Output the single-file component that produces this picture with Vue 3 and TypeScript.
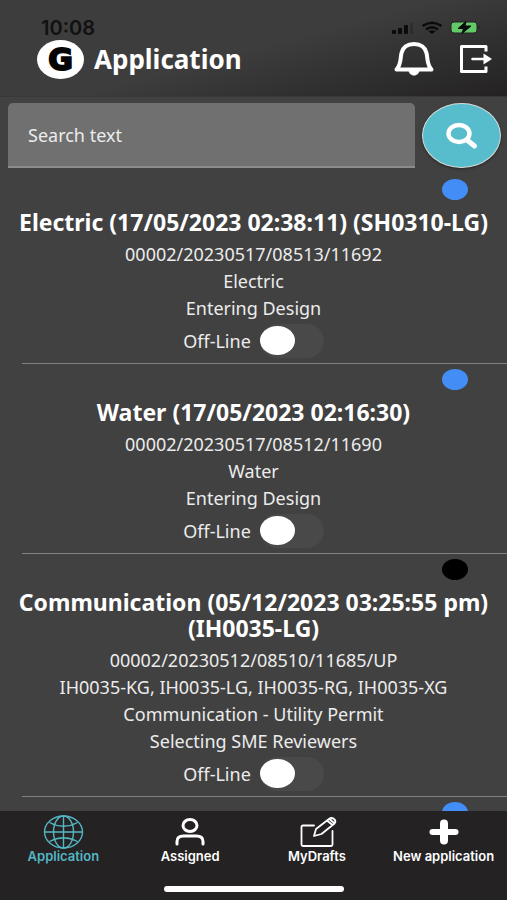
<script setup lang="ts">
import { ref } from 'vue'

interface Entry {
  title: string
  lines: string[]
  dot: 'blue' | 'black'
  offline: boolean
}

const query = ref('')

const entries = ref<Entry[]>([
  {
    title: 'Electric (17/05/2023 02:38:11) (SH0310-LG)',
    lines: ['00002/20230517/08513/11692', 'Electric', 'Entering Design'],
    dot: 'blue',
    offline: false,
  },
  {
    title: 'Water (17/05/2023 02:16:30)',
    lines: ['00002/20230517/08512/11690', 'Water', 'Entering Design'],
    dot: 'blue',
    offline: false,
  },
  {
    title: 'Communication (05/12/2023 03:25:55 pm) (IH0035-LG)',
    lines: [
      '00002/20230512/08510/11685/UP',
      'IH0035-KG, IH0035-LG, IH0035-RG, IH0035-XG',
      'Communication - Utility Permit',
      'Selecting SME Reviewers',
    ],
    dot: 'black',
    offline: false,
  },
])

const tabs = ['Application', 'Assigned', 'MyDrafts', 'New application']
const active = ref('Application')
</script>

<template>
  <div class="screen">
    <header class="header">
      <div class="status">
        <span class="time">10:08</span>
        <svg class="status-icons" width="90" height="16" viewBox="0 0 90 16" aria-hidden="true">
          <rect x="1" y="10" width="4" height="4" rx="1" />
          <rect x="7" y="8" width="4" height="6" rx="1" />
          <rect x="13" y="5" width="4" height="9" rx="1" />
          <rect x="19" y="3" width="3" height="11" rx="1" opacity="0.25" />
          <g fill="none" stroke="#0b0b0b" stroke-width="2.6">
            <path d="M31.500 6Q41 -0.500 50.500 6" />
            <path d="M35 9.500Q41 5 47 9.500" />
          </g>
          <path d="M37.500 11.500Q41 9 44.500 11.500L41 14Z" />
          <rect x="60" y="2" width="26" height="11" rx="3" fill="#62c968" stroke="#222" stroke-width="1" />
          <path d="M87.500 5.500q2.500 2 0 4z" fill="#222" />
          <path d="M75 1.500L67 8.500h5.500L71 13.500l9-7.500h-6z" stroke="#0b0b0b" />
        </svg>
      </div>
      <div class="bar">
        <span class="logo" aria-hidden="true">G</span>
        <h1>Application</h1>
        <button class="icon-btn" type="button" aria-label="Notifications">
          <svg width="42" height="36" viewBox="0 0 42 36">
            <path d="M3.500 28.500C8.500 23 7 18 8.500 12C10 6 15 3 21 3S32 6 33.500 12C35 18 33.500 23 38.500 28.500Z" fill="none" stroke="#fff" stroke-width="4" stroke-linejoin="round" />
            <path d="M15.500 29h11c0 3-2.500 5.500-5.500 5.500s-5.500-2.500-5.500-5.500z" fill="#fff" />
          </svg>
        </button>
        <button class="icon-btn" type="button" aria-label="Log out">
          <svg width="34" height="30" viewBox="0 0 34 30">
            <path d="M27 7.500V2.500H2.500V27.500H27V22.500" fill="none" stroke="#fff" stroke-width="3" stroke-linejoin="round" />
            <path d="M13.500 15h13" stroke="#fff" stroke-width="2.600" stroke-linecap="round" />
            <path d="M24.500 9.500L33 15l-8.500 5.500z" fill="#fff" />
          </svg>
        </button>
      </div>
    </header>

    <main class="content">
      <form class="search" role="search" @submit.prevent>
        <input v-model="query" type="text" placeholder="Search text" aria-label="Search text" />
        <button type="submit" aria-label="Search">
          <svg width="34" height="28" viewBox="0 0 34 28">
            <ellipse cx="14" cy="11.500" rx="10.500" ry="8.500" fill="none" stroke="#fff" stroke-width="4.400" />
            <path d="M22 18l7.500 6" stroke="#fff" stroke-width="5" stroke-linecap="round" />
          </svg>
        </button>
      </form>

      <ul class="list">
        <li v-for="entry in entries" :key="entry.title" class="entry">
          <span class="dot" :class="entry.dot"></span>
          <h2>{{ entry.title }}</h2>
          <p v-for="line in entry.lines" :key="line">{{ line }}</p>
          <label class="toggle">
            <span>Off-Line</span>
            <input v-model="entry.offline" type="checkbox" role="switch" />
          </label>
          <hr />
        </li>
        <li class="entry"><span class="dot blue"></span></li>
      </ul>
    </main>

    <nav class="tabs">
      <div class="tab-row">
        <a
          v-for="(tab, i) in tabs"
          :key="tab"
          href="#"
          class="tab"
          :class="{ active: tab === active }"
          @click.prevent="active = tab"
        >
          <svg v-if="i === 0" width="42" height="34" viewBox="0 0 42 34" fill="none" stroke="currentColor" stroke-width="1.400">
            <ellipse cx="21.500" cy="17" rx="19" ry="16" />
            <ellipse cx="21.500" cy="17" rx="10" ry="16" />
            <path d="M21.500 1v32M2.500 17h38M7.500 7.500Q21.500 15 35.500 7.500M7.500 26.500Q21.500 19 35.500 26.500" />
          </svg>
          <svg v-else-if="i === 1" width="42" height="34" viewBox="0 0 42 34" fill="none" stroke="currentColor" stroke-width="3" stroke-linecap="round">
            <ellipse cx="21" cy="10.500" rx="7" ry="6" />
            <path d="M8 29v-2.500Q8 21 14.500 21h13Q34 21 34 26.500V29" />
          </svg>
          <svg v-else-if="i === 2" width="42" height="34" viewBox="0 0 42 34" fill="none" stroke="currentColor" stroke-width="1.800" stroke-linejoin="round" stroke-linecap="round">
            <path d="M18 10.500H7Q5.500 10.500 5.500 12V29.500Q5.500 31 7 31H35Q36.500 31 36.500 29.500V16" />
            <path d="M18 21L20 14L33 4Q35.500 2 38 4T38.500 8.500L25.500 19ZM31 5.500L36.500 10M33.500 4L38 8" />
          </svg>
          <svg v-else width="42" height="34" viewBox="0 0 42 34" fill="none" stroke="currentColor" stroke-linecap="round">
            <path d="M21 8.500v17" stroke-width="8" />
            <path d="M9.500 17h23" stroke-width="6" />
          </svg>
          <span>{{ tab }}</span>
        </a>
      </div>
      <div class="home-indicator"></div>
    </nav>
  </div>
</template>

<style>
body {
  margin: 0;
  background: #414141;
}
</style>

<style scoped>
* {
  box-sizing: border-box;
}

.screen {
  display: flex;
  flex-direction: column;
  height: 100vh;
  background: #414141;
  color: #fff;
  font-family: 'Noto Sans', 'Open Sans', sans-serif;
}

.header {
  flex: none;
  padding: 18px 14px 16px 37px;
  background: linear-gradient(165deg, #3d3d3d 50%, #242222 100%);
  border-bottom: 1px solid #383838;
}

.status {
  display: flex;
  align-items: center;
  justify-content: space-between;
  height: 20px;
  padding: 0 12px 0 4px;
}

.time {
  color: #111;
  font: 600 20px/20px Inter, sans-serif;
}

.status-icons {
  fill: #0b0b0b;
}

.bar {
  display: flex;
  align-items: center;
  height: 42px;
}

.logo {
  display: flex;
  align-items: center;
  justify-content: center;
  width: 47px;
  height: 39px;
  border-radius: 50%;
  background: #fff;
  color: #050505;
  font: 700 30px/39px 'DejaVu Sans', sans-serif;
  -webkit-text-stroke: 2px #050505;
}

h1 {
  flex: 1;
  margin: 0 0 0 10px;
  font-size: 26px;
  line-height: 32px;
  font-weight: 700;
}

.icon-btn {
  display: flex;
  margin-left: 24px;
  padding: 0;
  border: 0;
  background: none;
}

.content {
  flex: 1;
  min-height: 0;
  overflow: hidden;
}

.search {
  display: flex;
  gap: 7px;
  padding: 6px 6px 6px 8px;
}

.search input {
  flex: 1;
  min-width: 0;
  height: 65px;
  padding: 0 20px;
  border: 0;
  border-bottom: 2px solid #8c8c8c;
  border-radius: 5px 5px 0 0;
  background: #707070;
  color: #fff;
  font: 400 18px/24px 'Noto Sans', sans-serif;
}

.search input::placeholder {
  color: #ececec;
  opacity: 1;
}

.search button {
  display: flex;
  align-items: center;
  justify-content: center;
  width: 79px;
  height: 65px;
  padding: 0;
  border: 1px solid #d5dcd9;
  border-radius: 50%;
  background: #57bccb;
  box-shadow: 0 1px 3px rgba(0, 0, 0, 0.4);
}

.list {
  margin: 0;
  padding: 0;
  list-style: none;
}

.entry {
  display: flex;
  flex-direction: column;
  align-items: center;
  padding-top: 5px;
  text-align: center;
}

.dot {
  align-self: flex-end;
  width: 26px;
  height: 21px;
  margin: 0 39px 9px 0;
  border-radius: 50%;
}

.dot.blue {
  background: #438df7;
}

.dot.black {
  background: #000;
}

h2 {
  margin: 0 8px 6px;
  font-size: 23px;
  line-height: 26px;
  font-weight: 700;
}

p {
  margin: 0;
  color: #ececec;
  font-size: 18px;
  line-height: 27px;
}

.toggle {
  display: flex;
  align-items: center;
  gap: 9px;
  height: 38px;
  color: #ececec;
  font-size: 18px;
  line-height: 27px;
}

.toggle input {
  appearance: none;
  width: 64px;
  height: 34px;
  margin: 0;
  border-radius: 17px;
  background: #494949;
}

.toggle input::before {
  content: '';
  display: block;
  width: 35px;
  height: 29px;
  margin-top: 2px;
  border-radius: 50%;
  background: #fff;
}

.toggle input:checked::before {
  margin-left: auto;
}

hr {
  align-self: stretch;
  margin: 3px 0 0 22px;
  border: 0;
  border-top: 1px solid #828282;
}

.tabs {
  flex: none;
  padding: 4px 0 8px;
  background: #242223;
}

.tab-row {
  display: grid;
  grid-template-columns: repeat(4, 1fr);
}

.tab {
  display: flex;
  flex-direction: column;
  align-items: center;
  color: #fff;
  font: 600 13px/14px Inter, sans-serif;
  text-decoration: none;
  white-space: nowrap;
}

.tab.active {
  color: #55b6c3;
}

.home-indicator {
  width: 180px;
  height: 6px;
  margin: 23px auto 0;
  border-radius: 3px;
  background: #fff;
}
</style>
